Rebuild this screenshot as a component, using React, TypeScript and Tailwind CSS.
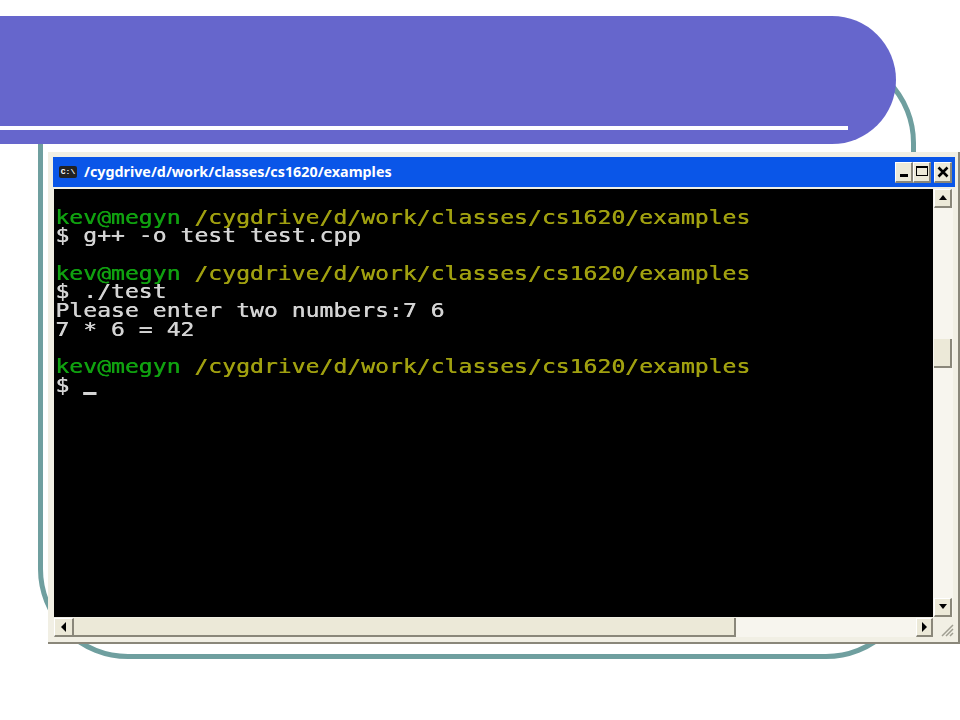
const prompt = "/cygdrive/d/work/classes/cs1620/examples";

function Prompt() {
  return (
    <div>
      <span className="text-[#10a010]">kev@megyn </span>
      <span className="text-[#a0a010]">{prompt}</span>
    </div>
  );
}

function Arrow({ dir }: { dir: "up" | "down" | "left" | "right" }) {
  const points = {
    up: "1,8 9,8 5,3",
    down: "1,3 9,3 5,8",
    left: "7,1 7,11 2,6",
    right: "3,1 3,11 8,6",
  }[dir];
  return (
    <svg width="10" height="12" viewBox="0 0 10 12">
      <polygon points={points} fill="#000" />
    </svg>
  );
}

function ScrollBtn({ dir, className }: { dir: "up" | "down" | "left" | "right"; className: string }) {
  return (
    <div
      className={`flex items-center justify-center bg-[#ece9d8] border-r-2 border-b-2 border-[#8a877a] border-t border-l border-t-white border-l-white ${className}`}
    >
      <Arrow dir={dir} />
    </div>
  );
}

function TitleBtn({ children, className }: { children: React.ReactNode; className: string }) {
  return (
    <div
      className={`flex h-[21px] w-[18px] items-center justify-center bg-[#ece9d8] border-r-2 border-b-2 border-[#8a877a] border-t border-l border-t-white border-l-white ${className}`}
    >
      {children}
    </div>
  );
}

export default function App() {
  return (
    <div className="relative h-[720px] w-[960px] overflow-hidden bg-white">
      {/* teal outline behind everything */}
      <div className="absolute left-[38px] top-[53px] h-[606px] w-[878px] rounded-[90px] border-[5px] border-[#6f9f9f]" />

      <div className="relative mt-4 h-[128px] w-[896px] rounded-r-[64px] bg-[#6666cc] pt-[110px]">
        <div className="h-[4px] w-[848px] bg-white" />
      </div>

      <div className="relative ml-[48px] mt-2 flex h-[492px] w-[912px] flex-col bg-[#f1efe4] pb-[6px] pl-[6px] pr-[5px] pt-[5px] shadow-[inset_-2px_-2px_0_#8a877a]">
        <div className="-ml-[1px] flex h-[30px] shrink-0 items-center bg-[#0a56e8] pl-[6px] pr-[3px]">
          <div className="flex h-[12px] w-[18px] items-center justify-center rounded-[2px] bg-[#222] text-[8px] font-bold leading-none text-white [font-family:'Liberation_Mono',monospace]">
            C:\
          </div>
          <div className="ml-[7px] text-[14.3px] font-bold text-white [font-family:'Noto_Sans',sans-serif]">{prompt}</div>
          <div className="ml-auto flex">
            <TitleBtn className="">
              <div className="mt-[8px] h-[3px] w-[8px] bg-black" />
            </TitleBtn>
            <TitleBtn className="">
              <div className="mb-[2px] h-[10px] w-[12px] border border-t-[2px] border-black" />
            </TitleBtn>
            <TitleBtn className="ml-[3px]">
              <svg width="12" height="12" viewBox="0 0 12 12">
                <path d="M1.5 1.5 10.5 10.5M10.5 1.5 1.5 10.5" stroke="#000" strokeWidth="2.6" />
              </svg>
            </TitleBtn>
          </div>
        </div>

        <div className="mt-[2px] flex min-h-0 flex-1">
          <div className="h-[428px] w-[879px] overflow-hidden bg-black">
            <div className="w-[600px] origin-top-left scale-x-[1.215] whitespace-pre pl-[1px] text-[19px] leading-[18.67px] text-[#d4d4d4] blur-[0.4px] [font-family:'DejaVu_Sans_Mono',monospace] [text-shadow:0.4px_0_0_currentColor]">
              <div>&nbsp;</div>
              <Prompt />
              <div>$ g++ -o test test.cpp</div>
              <div>&nbsp;</div>
              <Prompt />
              <div>$ ./test</div>
              <div>Please enter two numbers:7 6</div>
              <div>7 * 6 = 42</div>
              <div>&nbsp;</div>
              <Prompt />
              <div>
                $ <span className="relative top-[3px] inline-block h-[3px] w-[11px] bg-[#d4d4d4]" />
              </div>
            </div>
          </div>
          <div className="flex h-[428px] w-[20px] flex-col bg-[#f7f5ee] pl-[1px]">
            <ScrollBtn dir="up" className="h-[19px] w-[18px]" />
            <div className="flex-1 pt-[131px]">
              <div className="h-[29px] w-[18px] border-r-2 border-b-2 border-[#8a877a] bg-[#ece9d8]" />
            </div>
            <ScrollBtn dir="down" className="h-[19px] w-[18px]" />
          </div>
        </div>

        <div className="flex h-[20px] shrink-0">
          <ScrollBtn dir="left" className="h-[19px] w-[20px]" />
          <div className="h-[19px] w-[662px] border-r-2 border-b-2 border-[#8a877a] bg-[#ece9d8]" />
          <div className="h-[19px] w-[180px] bg-[#f7f5ee]" />
          <ScrollBtn dir="right" className="h-[19px] w-[17px]" />
          <div className="flex flex-1 items-end justify-end pb-[1px] pr-[1px]">
            <svg width="14" height="14" viewBox="0 0 14 14">
              <path d="M2 13 13 2M6 13 13 6M10 13 13 10" stroke="#a09e92" strokeWidth="1.5" />
            </svg>
          </div>
        </div>
      </div>
    </div>
  );
}
